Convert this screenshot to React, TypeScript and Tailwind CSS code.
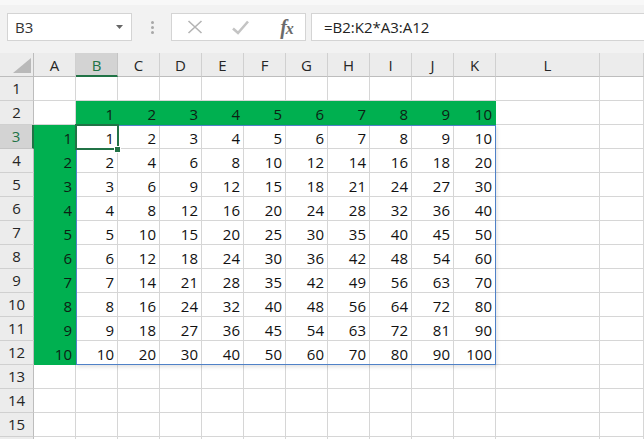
import React from "react";

const COLS = ["A", "B", "C", "D", "E", "F", "G", "H", "I", "J", "K", "L", ""];
const ROWS = Array.from({ length: 16 }, (_, i) => i + 1);

function value(r: number, c: number): number | null {
  if (r === 2 && c >= 1 && c <= 10) return c;
  if (r >= 3 && r <= 12 && c === 0) return r - 2;
  if (r >= 3 && r <= 12 && c >= 1 && c <= 10) return (r - 2) * c;
  return null;
}

function isGreen(r: number, c: number) {
  return (r === 2 && c >= 1 && c <= 10) || (c === 0 && r >= 3 && r <= 12);
}

function Toolbar() {
  return (
    <div className="h-[53px] bg-[#f2f2f2] flex flex-col">
      <div className="h-[5px] bg-[#f8f8f8]" />
      <div className="flex pl-[7px] pt-[8px]">
        <div className="w-[125px] h-[28px] bg-white border border-[#d4d4d4] flex items-center pl-[7px] pr-[8px]">
          <span className="flex-1 text-[15px] text-[#333] leading-none">B3</span>
          <svg width="7" height="4" viewBox="0 0 7 4">
            <path d="M0 0 L7 0 L3.5 4 Z" fill="#666" />
          </svg>
        </div>
        <div className="w-[39px] flex flex-col items-center justify-center gap-[2px] pl-[2px]">
          <div className="w-[3px] h-[3px] rounded-full bg-[#a8a8a8]" />
          <div className="w-[3px] h-[3px] rounded-full bg-[#a8a8a8]" />
          <div className="w-[3px] h-[3px] rounded-full bg-[#a8a8a8]" />
        </div>
        <div className="w-[135px] h-[28px] bg-white border border-[#d4d4d4] flex items-center">
          <div className="w-[44px] flex justify-center pl-[1px]">
            <svg width="16" height="14" viewBox="0 0 16 14">
              <path d="M1.5 1 L14.5 13 M14.5 1 L1.5 13" stroke="#b4b4b4" strokeWidth="1.6" fill="none" />
            </svg>
          </div>
          <div className="w-[44px] flex justify-center pl-[4px]">
            <svg width="17" height="15" viewBox="0 0 17 15">
              <path d="M1 8.5 L6 13 L16 1.5" stroke="#c4c4c4" strokeWidth="2.6" fill="none" />
            </svg>
          </div>
          <div className="flex-1 flex justify-center pl-[8px]">
            <span
              className="text-[20px] italic font-bold text-[#6b6b6b] leading-none tracking-[-1px]"
              style={{ fontFamily: '"Liberation Serif", "DejaVu Serif", serif' }}
            >
              f<span className="text-[16px]">x</span>
            </span>
          </div>
        </div>
        <div className="flex-1 ml-[5px] -mr-[2px] h-[28px] bg-white border border-[#d4d4d4] flex items-center pl-[12px]">
          <span className="text-[15px] text-[#222] leading-none">=B2:K2*A3:A12</span>
        </div>
      </div>
    </div>
  );
}

function Grid() {
  const cells: React.ReactNode[] = [];
  cells.push(
    <div key="corner" className="bg-[#ececec] border-r border-b border-[#bdbdbd] relative">
      <svg className="absolute left-[13px] top-[5px]" width="18" height="15" viewBox="0 0 18 15">
        <path d="M18 0 L18 15 L0 15 Z" fill="#b9b9b9" />
      </svg>
    </div>
  );
  COLS.forEach((col, c) => {
    const sel = c === 1;
    cells.push(
      <div
        key={"h" + c}
        className={
          sel
            ? "bg-[#d3d3d3] border-r border-[#c4c4c4] border-b-2 border-b-[#217346] text-[#217346] flex items-center justify-center pt-[2px]"
            : "bg-[#ececec] border-r border-[#d0d0d0] border-b border-b-[#bdbdbd] text-[#262626] flex items-center justify-center pt-[2px]"
        }
      >
        <span className="leading-[21px]">{col}</span>
      </div>
    );
  });
  ROWS.forEach((r) => {
    const sel = r === 3;
    cells.push(
      <div
        key={"r" + r}
        className={
          sel
            ? "bg-[#d3d3d3] border-b border-[#c4c4c4] border-r-2 border-r-[#217346] text-[#217346] flex items-center justify-center"
            : "bg-[#ececec] border-b border-[#d0d0d0] border-r border-r-[#bdbdbd] text-[#262626] flex items-center justify-center"
        }
      >
        {r < 16 ? <span className="leading-[21px]">{r}</span> : null}
      </div>
    );
    COLS.forEach((_, c) => {
      const v = value(r, c);
      const g = isGreen(r, c);
      cells.push(
        <div
          key={r + "-" + c}
          className={
            g
              ? "bg-[#00b050] border-r border-b border-[#00b050] text-right pr-[3px] pt-[3px] leading-[21px] overflow-hidden text-[#0d1f14]"
              : "bg-white border-r border-b border-[#d6d6d6] text-right pr-[3px] pt-[3px] leading-[21px] overflow-hidden text-[#111]"
          }
        >
          {v}
        </div>
      );
    });
  });

  return (
    <div className="relative flex-1 overflow-hidden">
      <div className="grid grid-cols-[34px_repeat(11,42px)_104px_1fr] auto-rows-[24px] text-[15px]">
        {cells}
      </div>
      <div className="absolute left-[76px] top-[72px] w-[420px] h-[240px] border border-[#4f81c7] shadow-[1px_2px_4px_rgba(0,0,0,0.12)] pointer-events-none" />
      <div className="absolute left-[75px] top-[71px] w-[44px] h-[26px] border-2 border-[#217346] pointer-events-none" />
      <div className="absolute left-[114px] top-[93px] w-[7px] h-[7px] bg-[#217346] border border-white pointer-events-none" />
    </div>
  );
}

export default function App() {
  return (
    <div
      className="w-[644px] h-[439px] overflow-hidden flex flex-col bg-white"
      style={{ fontFamily: '"Open Sans", "Noto Sans", sans-serif' }}
    >
      <Toolbar />
      <Grid />
    </div>
  );
}
